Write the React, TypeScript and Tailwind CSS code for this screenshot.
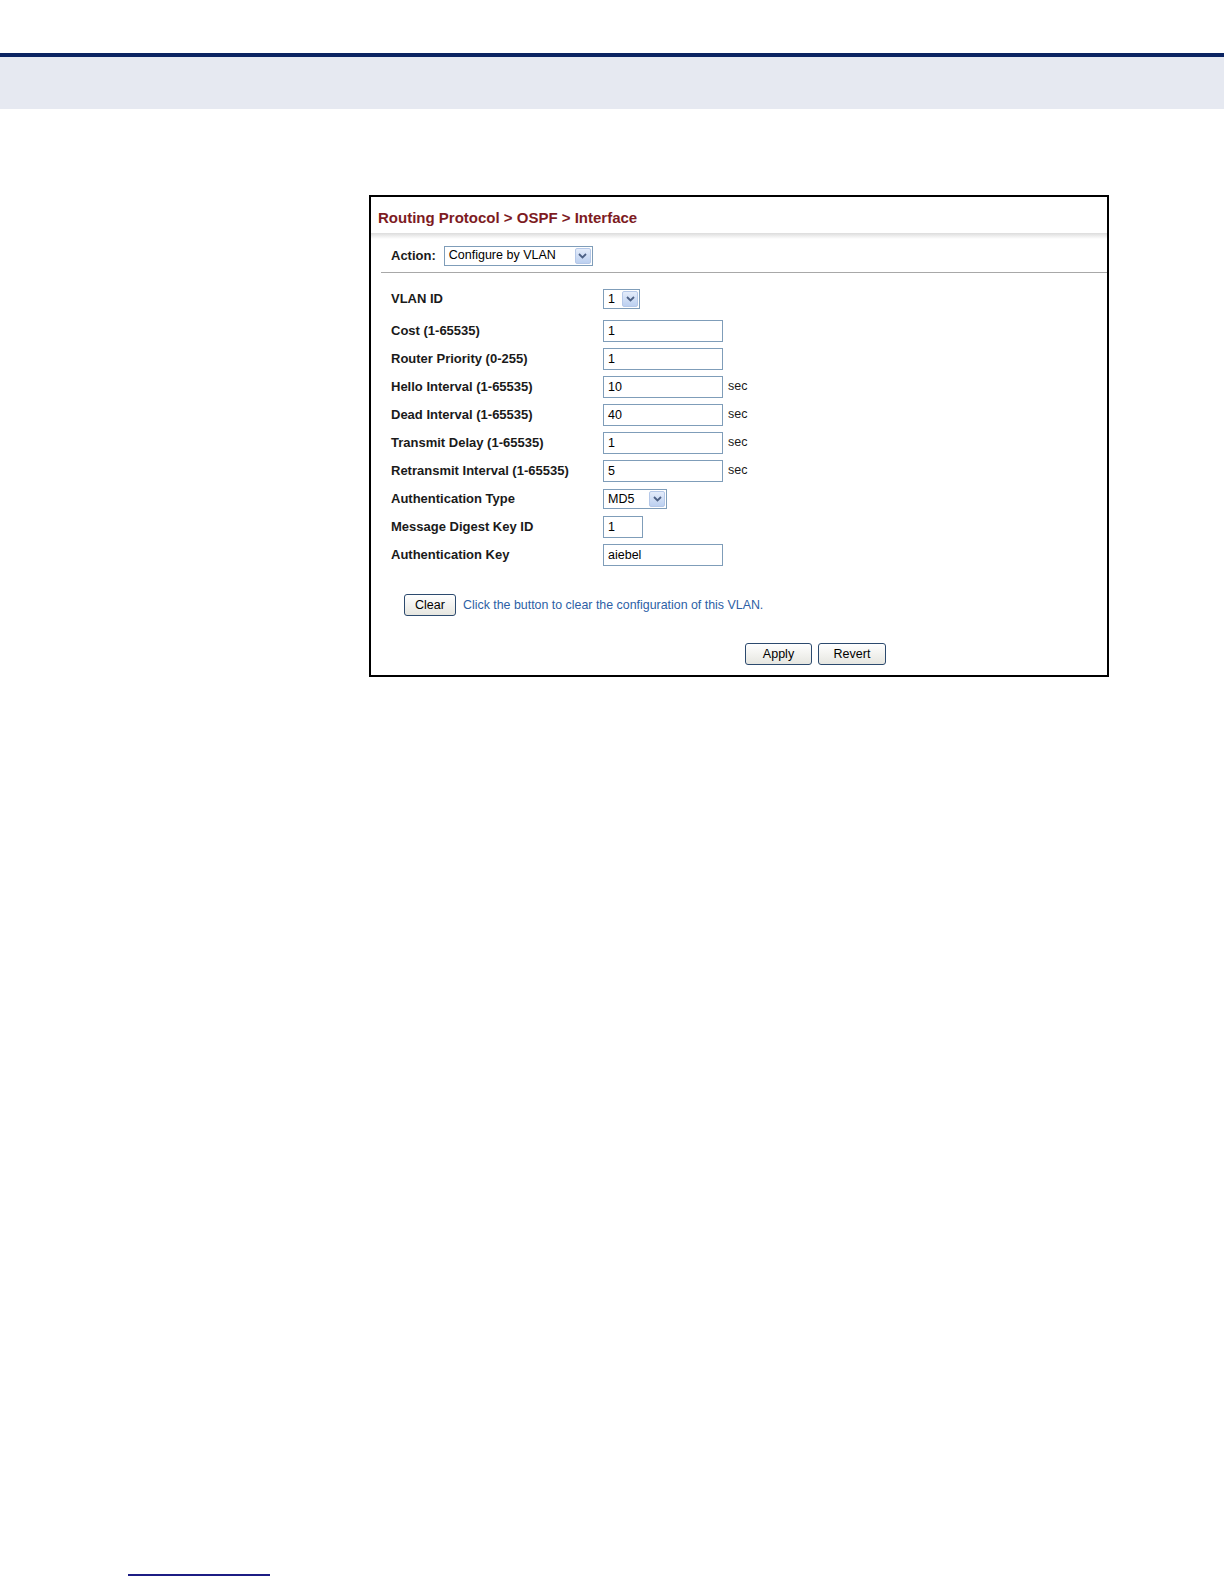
import React from 'react';

const FONT = { fontFamily: '"Liberation Sans", Arial, sans-serif' };

function Arrow() {
  return (
    <span className="flex h-[16px] w-[16px] items-center justify-center rounded-[2px] border border-[#b5c8e8] bg-gradient-to-b from-[#e4ecfa] to-[#bcd0f0]">
      <svg width="9" height="6" viewBox="0 0 9 6">
        <path d="M1 1 L4.5 4.5 L8 1" fill="none" stroke="#4d6185" strokeWidth="1.8" />
      </svg>
    </span>
  );
}

function Select({ value, width }: { value: string; width: string }) {
  return (
    <div className={`flex h-[20px] items-center justify-between border border-[#7f9db9] bg-white pl-[4px] pr-[1px] ${width}`}>
      <span className="text-[12.5px] leading-none text-black">{value}</span>
      <Arrow />
    </div>
  );
}

function Field({ value, width = 'w-[120px]' }: { value: string; width?: string }) {
  return (
    <div className={`flex h-[22px] items-center border border-[#7f9db9] bg-white pl-[4px] ${width}`}>
      <span className="text-[12.5px] leading-none text-black">{value}</span>
    </div>
  );
}

function Button({ label, width }: { label: string; width: string }) {
  return (
    <div className={`flex h-[22px] items-center justify-center rounded-[3px] border border-[#2c4a6e] bg-gradient-to-b from-white to-[#e6e6e0] text-[12.5px] text-black ${width}`}>
      {label}
    </div>
  );
}

const rows: { label: string; value: string; sec?: boolean }[] = [
  { label: 'Cost (1-65535)', value: '1' },
  { label: 'Router Priority (0-255)', value: '1' },
  { label: 'Hello Interval (1-65535)', value: '10', sec: true },
  { label: 'Dead Interval (1-65535)', value: '40', sec: true },
  { label: 'Transmit Delay (1-65535)', value: '1', sec: true },
  { label: 'Retransmit Interval (1-65535)', value: '5', sec: true },
];

function Row({ label, children }: { label: string; children: React.ReactNode }) {
  return (
    <div className="flex h-[28px] items-center">
      <div className="w-[212px] text-[13px] font-bold text-[#1a1a1a]">{label}</div>
      {children}
    </div>
  );
}

export default function App() {
  return (
    <div className="flex min-h-[1584px] flex-col bg-white" style={FONT}>
      <div className="h-[53px]" />
      <div className="h-[4px] bg-[#0b2462]" />
      <div className="h-[52px] bg-[#e6e9f1]" />

      <div className="ml-[369px] mt-[86px] w-[740px] border-2 border-black bg-white">
        <div className="flex h-[36px] items-center pl-[7px] pt-[6px]">
          <span className="text-[15px] font-bold text-[#7d1b1f]">Routing Protocol &gt; OSPF &gt; Interface</span>
        </div>
        <div className="h-[6px] bg-gradient-to-b from-[#dcdcdc] to-white" />

        <div className="ml-[10px] flex h-[34px] items-center border-b border-[#a8a8a8] pl-[10px]">
          <span className="mr-[8px] text-[13px] font-bold text-[#1a1a1a]">Action:</span>
          <Select value="Configure by VLAN" width="w-[149px]" />
        </div>

        <div className="pl-[20px] pt-[12px]">
          <Row label="VLAN ID">
            <Select value="1" width="w-[37px]" />
          </Row>
          <div className="h-[4px]" />
          {rows.map(r => (
            <Row key={r.label} label={r.label}>
              <Field value={r.value} />
              {r.sec && <span className="ml-[5px] -mt-[2px] text-[12.5px] text-[#1a1a1a]">sec</span>}
            </Row>
          ))}
          <Row label="Authentication Type">
            <Select value="MD5" width="w-[64px]" />
          </Row>
          <Row label="Message Digest Key ID">
            <Field value="1" width="w-[40px]" />
          </Row>
          <Row label="Authentication Key">
            <Field value="aiebel" />
          </Row>
        </div>

        <div className="mt-[25px] flex items-center pl-[33px]">
          <Button label="Clear" width="w-[52px]" />
          <span className="ml-[7px] text-[12.4px] text-[#2d5fa6]">Click the button to clear the configuration of this VLAN.</span>
        </div>

        <div className="mb-[10px] mt-[27px] flex gap-[6px] pl-[374px]">
          <Button label="Apply" width="w-[67px]" />
          <Button label="Revert" width="w-[68px]" />
        </div>
      </div>

      <div className="flex-1" />
      <div className="mb-[8px] ml-[128px] h-[2px] w-[142px] bg-[#1c1c84]" />
    </div>
  );
}
